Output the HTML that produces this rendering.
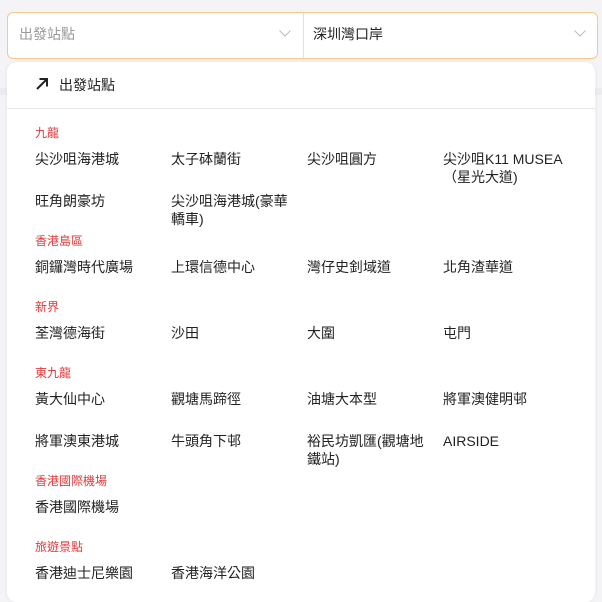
<!DOCTYPE html>
<html><head><meta charset="utf-8"><style>
*{margin:0;padding:0;box-sizing:border-box}
body{width:602px;height:590px;background:#f4f4f6;font-family:"Liberation Sans","Noto Sans CJK TC",sans-serif;position:relative;overflow:hidden}
.bar{position:absolute;left:7px;top:12px;width:591px;height:47px;background:#fff;border:1px solid #f5c987;border-radius:6px}
.bar .div{position:absolute;left:295px;top:0;width:1px;height:45px;background:#e0e0e0}
.t{position:absolute;font-size:14px;line-height:18px;color:#222;white-space:nowrap}
.i,.l{white-space:normal}
.chev{position:absolute}
.dd{position:absolute;left:7px;top:62px;width:588px;height:540px;background:#fff;border-radius:10px;box-shadow:0 0 4px rgba(0,0,0,.06)}
.hr{position:absolute;left:7px;top:108px;width:588px;height:1px;background:#e6e6e6}
.l{position:absolute;font-size:12px;line-height:16px;color:#e0383c;white-space:nowrap}
.i{position:absolute;font-size:14px;line-height:18px;color:#222;width:128px}
</style></head><body>
<div style="position:absolute;left:0;top:88px;width:602px;height:7px;background:#ececf0"></div>
<div class="bar"><div class="div"></div></div>
<div class="t" style="left:19px;top:25px;color:#999">出發站點</div>
<svg class="chev" style="left:279px;top:30px" width="12" height="7" viewBox="0 0 12 7"><path d="M0.5 0.5L6 6L11.5 0.5" stroke="#bbb" stroke-width="1" fill="none"/></svg>
<div class="t" style="left:313px;top:25px">深圳灣口岸</div>
<svg class="chev" style="left:574px;top:30px" width="12" height="7" viewBox="0 0 12 7"><path d="M0.5 0.5L6 6L11.5 0.5" stroke="#bbb" stroke-width="1" fill="none"/></svg>
<div class="dd"></div>
<div class="hr"></div>
<svg style="position:absolute;left:35px;top:77px" width="14" height="14" viewBox="0 0 14 14"><path d="M2 12L12 2M4.5 2H12V9.5" stroke="#222" stroke-width="2" fill="none"/></svg>
<div class="t" style="left:59px;top:76px">出發站點</div>

<div class="l" style="left:35px;top:125px">九龍</div>
<div class="i" style="left:35px;top:150px">尖沙咀海港城</div>
<div class="i" style="left:171px;top:150px">太子砵蘭街</div>
<div class="i" style="left:307px;top:150px">尖沙咀圓方</div>
<div class="i" style="left:443px;top:150px;width:130px">尖沙咀K11 MUSEA （星光大道)</div>
<div class="i" style="left:35px;top:192px">旺角朗豪坊</div>
<div class="i" style="left:171px;top:192px">尖沙咀海港城(豪華轎車)</div>

<div class="l" style="left:35px;top:233px">香港島區</div>
<div class="i" style="left:35px;top:258px">銅鑼灣時代廣場</div>
<div class="i" style="left:171px;top:258px">上環信德中心</div>
<div class="i" style="left:307px;top:258px">灣仔史釗域道</div>
<div class="i" style="left:443px;top:258px">北角渣華道</div>

<div class="l" style="left:35px;top:299px">新界</div>
<div class="i" style="left:35px;top:324px">荃灣德海街</div>
<div class="i" style="left:171px;top:324px">沙田</div>
<div class="i" style="left:307px;top:324px">大圍</div>
<div class="i" style="left:443px;top:324px">屯門</div>

<div class="l" style="left:35px;top:365px">東九龍</div>
<div class="i" style="left:35px;top:390px">黃大仙中心</div>
<div class="i" style="left:171px;top:390px">觀塘馬蹄徑</div>
<div class="i" style="left:307px;top:390px">油塘大本型</div>
<div class="i" style="left:443px;top:390px">將軍澳健明邨</div>
<div class="i" style="left:35px;top:432px">將軍澳東港城</div>
<div class="i" style="left:171px;top:432px">牛頭角下邨</div>
<div class="i" style="left:307px;top:432px">裕民坊凱匯(觀塘地鐵站)</div>
<div class="i" style="left:443px;top:432px">AIRSIDE</div>

<div class="l" style="left:35px;top:473px">香港國際機場</div>
<div class="i" style="left:35px;top:498px">香港國際機場</div>

<div class="l" style="left:35px;top:539px">旅遊景點</div>
<div class="i" style="left:35px;top:564px">香港迪士尼樂園</div>
<div class="i" style="left:171px;top:564px">香港海洋公園</div>
</body></html>
